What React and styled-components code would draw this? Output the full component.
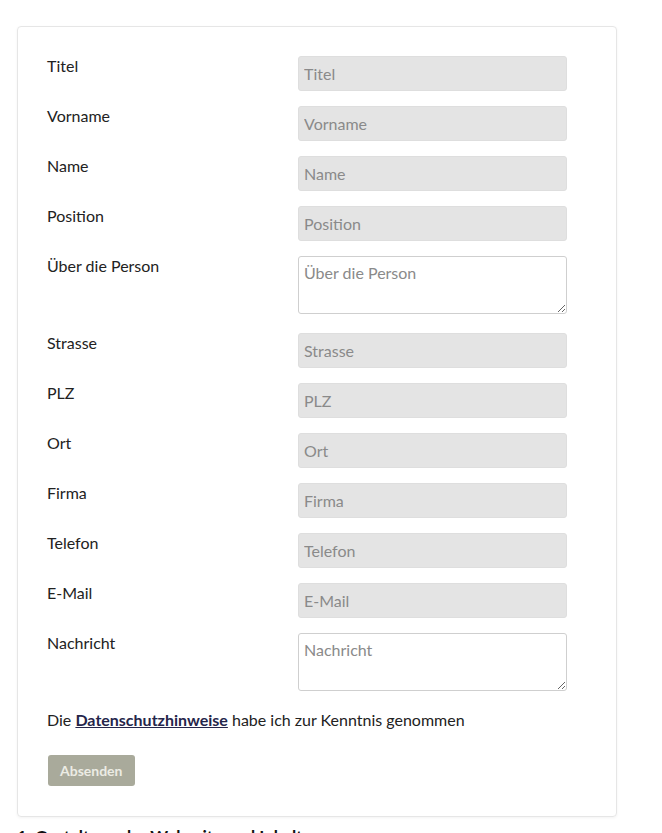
import React from "react";
import styled, { createGlobalStyle } from "styled-components";

const fields = [
	{ label: "Titel" },
	{ label: "Vorname" },
	{ label: "Name" },
	{ label: "Position" },
	{ label: "Über die Person", multi: true },
	{ label: "Strasse" },
	{ label: "PLZ" },
	{ label: "Ort" },
	{ label: "Firma" },
	{ label: "Telefon" },
	{ label: "E-Mail" },
	{ label: "Nachricht", multi: true },
];

const App = () => {
	return (
		<Page>
			<GlobalStyle />
			<Card>
				{fields.map((f) => (
					<Row key={f.label} $multi={f.multi}>
						<Label>{f.label}</Label>
						{f.multi ? (
							<TextArea placeholder={f.label} />
						) : (
							<Input placeholder={f.label} />
						)}
					</Row>
				))}
				<Consent>
					Die <a href="#">Datenschutzhinweise</a> habe ich zur Kenntnis genommen
				</Consent>
				<Submit type="button">Absenden</Submit>
			</Card>
			<Heading>1. Gestaltung der Webseite und Inhalte</Heading>
		</Page>
	);
};

const GlobalStyle = createGlobalStyle`
	body {
		margin: 0;
		background: #fff;
		font-family: Lato, "Liberation Sans", sans-serif;
		color: #222;
	}
`;

const Page = styled.div`
	padding: 26px 45px 0 17px;
	height: 833px;
	box-sizing: border-box;
	overflow: hidden;
`;

const Card = styled.div`
	width: 600px;
	box-sizing: border-box;
	border: 1px solid #e6e6e6;
	border-radius: 4px;
	box-shadow: 0 1px 3px rgba(0, 0, 0, 0.05);
	padding: 29px 30px 30px 29px;
	display: flex;
	flex-direction: column;
	align-items: flex-start;
`;

const Row = styled.div`
	display: grid;
	grid-template-columns: 251px 269px;
	align-items: start;
	margin-bottom: ${(p) => (p.$multi ? "19px" : "15px")};
	width: 100%;

	&:last-of-type {
		margin-bottom: 15px;
	}
`;

const Label = styled.label`
	font-size: 16px;
	line-height: 20px;
	color: #222;
`;

const field = `
	display: block;
	width: 269px;
	box-sizing: border-box;
	border-radius: 3px;
	font-family: Lato, "Liberation Sans", sans-serif;
	font-size: 16px;
	color: #333;
	padding: 6px 5px;
	outline: none;
	margin: 0;

	&::placeholder {
		color: #8a8a8a;
	}
`;

const Input = styled.input`
	${field}
	height: 35px;
	background: #e4e4e4;
	border: 1px solid #dedede;
`;

const TextArea = styled.textarea`
	${field}
	height: 58px;
	background: #fff;
	border: 1px solid #cfcfcf;
	resize: vertical;
	padding-top: 6px;
	line-height: 20px;
`;

const Consent = styled.p`
	margin: 0;
	font-size: 16px;
	line-height: 28px;
	color: #222;

	a {
		color: #25254a;
		font-weight: 700;
		text-decoration: underline;
	}
`;

const Submit = styled.button`
	margin-top: 21px;
	background: #a9aa9b;
	color: #ecece4;
	border: none;
	border-radius: 3px;
	font-family: Lato, "Liberation Sans", sans-serif;
	font-weight: 700;
	font-size: 14px;
	height: 31px;
	padding: 0 12px;
	margin-left: 1px;
`;

const Heading = styled.h2`
	margin: 9px 0 0 0;
	font-size: 17px;
	font-weight: 700;
	color: #111;
`;

export default App;
